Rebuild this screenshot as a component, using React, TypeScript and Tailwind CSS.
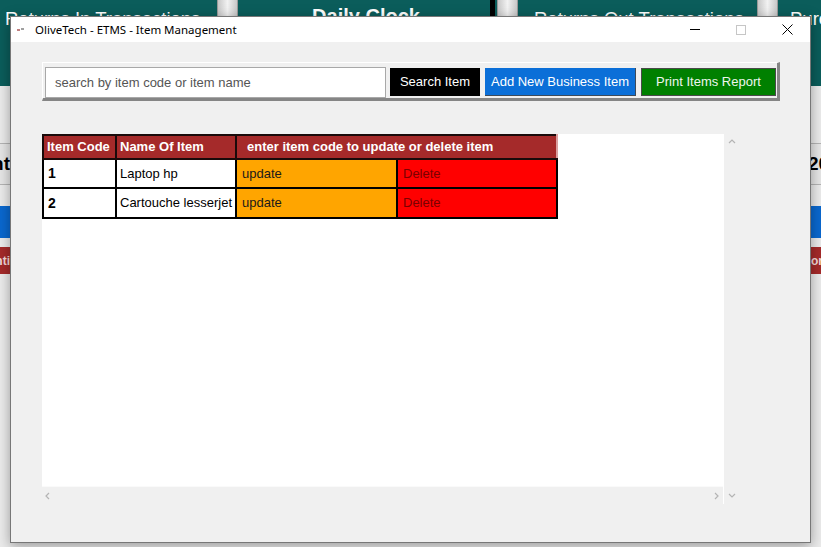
import React from "react";

const items = [
  { code: "1", name: "Laptop hp" },
  { code: "2", name: "Cartouche lesserjet" },
];

function Strip() {
  return (
    <div className="w-[21px] h-full bg-gradient-to-r from-[#c8c8c8] via-[#f2f2f2] to-[#c8c8c8] border-x border-[#9a9a9a]" />
  );
}

function TitleControls() {
  return (
    <div className="flex items-center h-full">
      <div className="w-[46px] h-full flex items-center justify-center">
        <svg width="10" height="1" viewBox="0 0 10 1">
          <rect width="10" height="1" fill="#000" />
        </svg>
      </div>
      <div className="w-[46px] h-full flex items-center justify-center">
        <svg width="10" height="10" viewBox="0 0 10 10">
          <rect x="0.5" y="0.5" width="9" height="9" fill="none" stroke="#c6c6c6" />
        </svg>
      </div>
      <div className="w-[46px] h-full flex items-center justify-center">
        <svg width="11" height="11" viewBox="0 0 11 11">
          <path d="M0.5 0.5 L10.5 10.5 M10.5 0.5 L0.5 10.5" stroke="#000" strokeWidth="1" />
        </svg>
      </div>
    </div>
  );
}

function Caret({ dir }: { dir: "up" | "down" | "left" | "right" }) {
  const d = {
    up: "M1 5 L4 2 L7 5",
    down: "M1 2 L4 5 L7 2",
    left: "M5 1 L2 4 L5 7",
    right: "M2 1 L5 4 L2 7",
  }[dir];
  return (
    <svg width="8" height="8" viewBox="0 0 8 8">
      <path d={d} fill="none" stroke="#b4b4b4" strokeWidth="1.2" />
    </svg>
  );
}

export default function App() {
  return (
    <div className="relative w-[821px] h-[547px] overflow-hidden bg-[#ebebeb] font-['Liberation_Sans',Arial,sans-serif]">
      {/* application behind the dialog */}
      <div className="flex h-[86px] bg-[#0b5d5b] text-white">
        <div className="w-[217px] pl-[5px] pt-[5px] text-[18.5px] whitespace-nowrap overflow-hidden">Returns In Transactions</div>
        <Strip />
        <div className="w-[248px] ml-[4px] pt-[1px] text-[20px] font-bold text-center">Daily Clock</div>
        <div className="w-[5px] bg-black" />
        <div className="w-[2px]" />
        <Strip />
        <div className="w-[236px] ml-[3px] pl-[13px] pt-[5px] text-[18.5px] whitespace-nowrap overflow-hidden">Returns Out Transactions</div>
        <Strip />
        <div className="flex-1 pl-[12px] pt-[5px] text-[18.5px] whitespace-nowrap overflow-hidden">Purchases</div>
      </div>
      <div className="h-[57px]" />
      <div className="flex justify-between items-center h-[42px] border-y border-[#b4b4b4] bg-[#e6e6e6] text-[19px] font-bold text-black">
        <div className="w-[10px] flex justify-end overflow-hidden whitespace-nowrap">Count</div>
        <div className="w-[10px] overflow-hidden whitespace-nowrap">
          <span className="-ml-[3px]">2025</span>
        </div>
      </div>
      <div className="h-[21px]" />
      <div className="h-[32px] bg-[#0a68cf]" />
      <div className="h-[9px]" />
      <div className="flex justify-between items-center h-[27px] bg-[#a52a2a] text-[12px] font-bold text-[#f3dada]">
        <div className="w-[10px] flex justify-end overflow-hidden whitespace-nowrap">Quanti</div>
        <div className="w-[10px] overflow-hidden whitespace-nowrap">ories</div>
      </div>

      {/* dialog window */}
      <div className="absolute left-[10px] top-[16px] w-[801px] h-[527px] flex flex-col border border-[#777] bg-[#f0f0f0] shadow-[0_3px_12px_rgba(0,0,0,0.35)]">
        <div className="h-[25px] bg-white flex items-center justify-between">
          <div className="flex items-center">
            <svg className="ml-[6px]" width="8" height="6" viewBox="0 0 8 6">
              <rect x="0" y="2" width="3" height="2" fill="#c08080" />
              <rect x="4" y="1" width="3" height="2" fill="#a0a0a0" />
            </svg>
            <span className="ml-[10px] text-[11.5px] text-black font-['Noto_Sans',sans-serif]">OliveTech - ETMS - Item Management</span>
          </div>
          <TitleControls />
        </div>

        <div className="flex-1 flex flex-col pl-[31px] pt-[20px]">
          {/* toolbar */}
          <div className="w-[738px] h-[39px] flex items-start pl-[2px] pt-[4px] border-t border-l border-white border-r-[3px] border-b-[3px] border-r-[#858585] border-b-[#858585] text-[13px]">
            <div className="w-[341px] h-[31px] flex items-center pl-[9px] bg-white border border-[#a8a8a8] text-[#555]">
              search by item code or item name
            </div>
            <div className="ml-[4px] mt-[1px] w-[90px] h-[28px] flex items-center justify-center bg-black text-white">
              Search Item
            </div>
            <div className="ml-[5px] mt-[1px] w-[151px] h-[28px] flex items-center justify-center bg-[#0b6fd8] border-r border-b border-[#3c4a5a] text-white">
              Add New Business Item
            </div>
            <div className="ml-[5px] mt-[1px] w-[135px] h-[28px] flex items-center justify-center bg-[#008000] border border-[#4a4a4a] text-[#eef6ee]">
              Print Items Report
            </div>
          </div>

          {/* table with scrollbars */}
          <div className="mt-[33px] grid grid-cols-[681px_17px] grid-rows-[353px_17px] w-[698px]">
            <div className="bg-white border-b border-[#fafafa]">
              <table className="table-fixed w-[514px] border-collapse text-[13px] text-black">
                <colgroup>
                  <col className="w-[73px]" />
                  <col className="w-[120px]" />
                  <col className="w-[161px]" />
                  <col className="w-[160px]" />
                </colgroup>
                <thead>
                  <tr className="h-[24px] bg-[#a52a2a] text-white font-bold">
                    <th className="border-2 border-[#1a0a0a] px-[3px] text-left font-bold">Item Code</th>
                    <th className="border-2 border-[#1a0a0a] px-[3px] text-left font-bold">Name Of Item</th>
                    <th colSpan={2} className="border-2 border-[#1a0a0a] border-r-[#d9a0a0] pl-[10px] text-left font-bold whitespace-nowrap">
                      enter item code to update or delete item
                    </th>
                  </tr>
                </thead>
                <tbody>
                  {items.map((it, i) => (
                    <tr key={it.code} className={i === 0 ? "h-[29px]" : "h-[30px]"}>
                      <td className="border-2 border-black px-[4px] font-bold text-[14px]">{it.code}</td>
                      <td className="border-2 border-black px-[3px] whitespace-nowrap">{it.name}</td>
                      <td className="border-2 border-black px-[5px] bg-[#ffa500] text-[#1a1a1a]">update</td>
                      <td className="border-2 border-black px-[5px] bg-[#ff0000] text-[#7a0000]">Delete</td>
                    </tr>
                  ))}
                </tbody>
              </table>
            </div>
            <div className="row-span-2 flex flex-col items-center justify-between py-[4px] border-l border-white">
              <Caret dir="up" />
              <Caret dir="down" />
            </div>
            <div className="flex items-center justify-between px-[2px]">
              <Caret dir="left" />
              <Caret dir="right" />
            </div>
          </div>
        </div>
      </div>
    </div>
  );
}
